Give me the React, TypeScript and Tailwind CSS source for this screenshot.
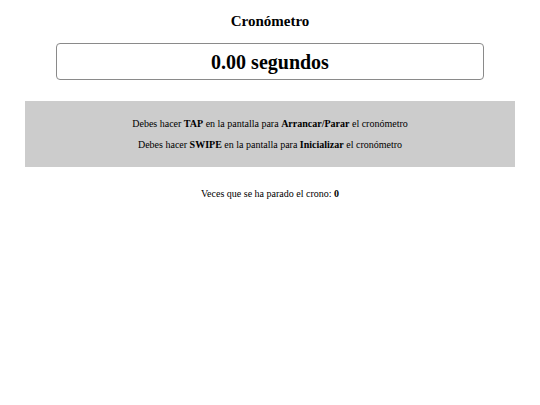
export default function App() {
  return (
    <div className="min-h-[405px] bg-white text-black font-['Liberation_Serif']">
      <div className="pt-[12px] text-center text-[15px] font-bold leading-[18px]">Cronómetro</div>
      <div className="mx-[56px] mt-[13px] h-[37px] rounded-[4px] border border-[#8a8a8a] flex items-center justify-center text-[20px] font-bold">
        0.00 segundos
      </div>
      <div className="mx-[25px] mt-[21px] h-[66px] bg-[#cccccc] flex flex-col items-center justify-center gap-[9px] text-[10px] leading-[12px]">
        <p>
          Debes hacer <b>TAP</b> en la pantalla para <b>Arrancar/Parar</b> el cronómetro
        </p>
        <p>
          Debes hacer <b>SWIPE</b> en la pantalla para <b>Inicializar</b> el cronómetro
        </p>
      </div>
      <p className="mt-[21px] text-center text-[10px] leading-[12px]">
        Veces que se ha parado el crono: <b>0</b>
      </p>
    </div>
  )
}
